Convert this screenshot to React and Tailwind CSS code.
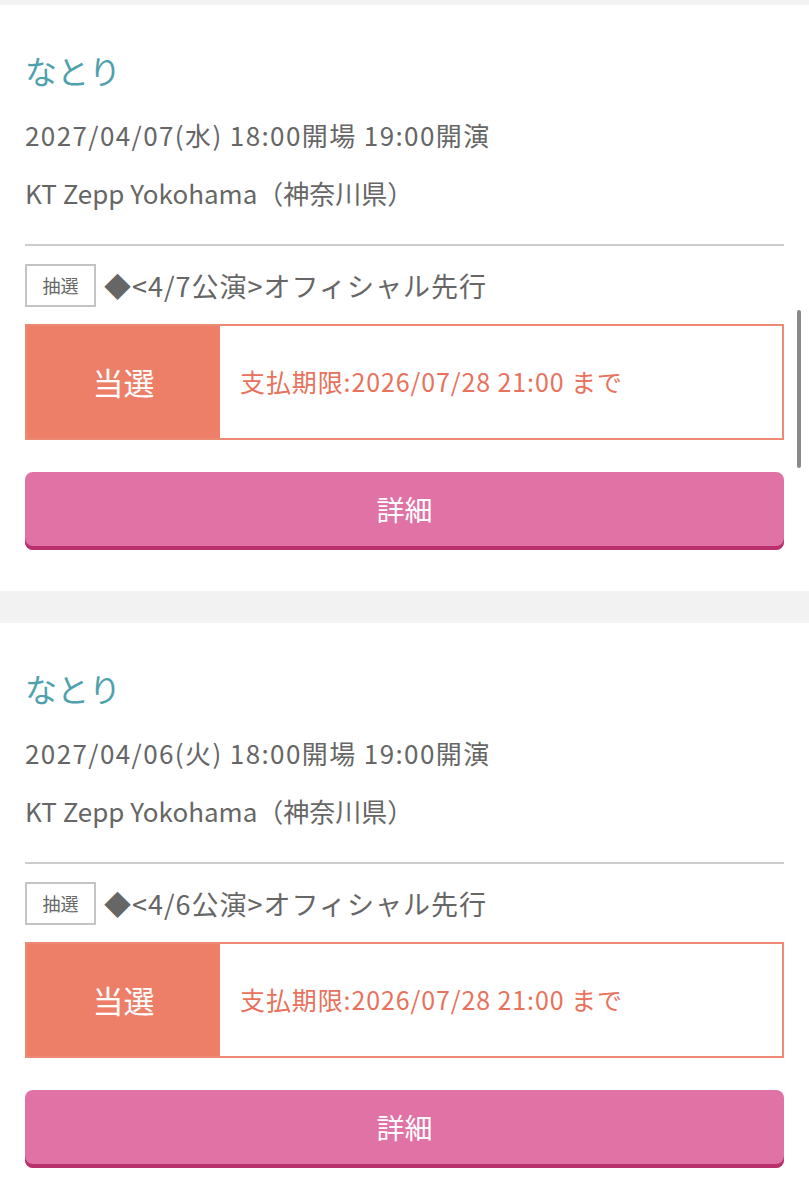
import React from "react"

const tickets = [
  { date: "2027/04/07(水) 18:00開場 19:00開演", show: "◆<4/7公演>オフィシャル先行" },
  { date: "2027/04/06(火) 18:00開場 19:00開演", show: "◆<4/6公演>オフィシャル先行" },
]

function TicketCard({ t }) {
  return (
    <div className="bg-white px-[25px] pt-[45px] pb-[41px]">
      <h2 className="text-[32px] leading-[40px] text-[#4fa1ae]">なとり</h2>
      <p className="mt-[27px] text-[26px] leading-[36px] tracking-[1.4px] text-[#666666]">{t.date}</p>
      <p className="mt-[22px] text-[26px] leading-[36px] text-[#666666]">KT Zepp Yokohama（神奈川県）</p>
      <div className="mt-[33px] h-[2px] bg-[#cccccc]"></div>

      <div className="mt-[18px] flex items-center gap-[8px]">
        <span className="flex h-[43px] w-[71px] items-center justify-center border-2 border-[#c4c4c4] text-[18px] text-[#666666]">
          抽選
        </span>
        <span className="text-[27px] leading-[36px] tracking-[1px] text-[#666666]">{t.show}</span>
      </div>

      <div className="mt-[17px] flex h-[116px] border-2 border-[#ec8a74]">
        <div className="flex w-[193px] items-center justify-center bg-[#ed7f69] text-[31px] text-white">
          当選
        </div>
        <div className="flex flex-1 items-center pl-[20px] text-[25px] tracking-[0.9px] text-[#e8725c]">
          支払期限:2026/07/28 21:00 まで
        </div>
      </div>

      <button className="mt-[32px] flex h-[78px] w-full items-center justify-center rounded-[8px] bg-[#e072a6] pb-[4px] text-[28px] text-white shadow-[inset_0_-4px_0_#b8306c]">
        詳細
      </button>
    </div>
  )
}

export default function App() {
  return (
    <div
      className="relative min-h-[1200px] bg-[#f2f2f2] pt-[5px]"
      style={{ fontFamily: '"Noto Sans CJK JP", "Noto Sans", sans-serif' }}
    >
      <div className="flex flex-col gap-[32px]">
        {tickets.map((t, i) => (
          <TicketCard key={i} t={t} />
        ))}
      </div>
      {/* scrollbar overlay */}
      <div className="absolute right-[8px] top-[310px] h-[158px] w-[4px] rounded-full bg-[#8a8a8a]"></div>
    </div>
  )
}
